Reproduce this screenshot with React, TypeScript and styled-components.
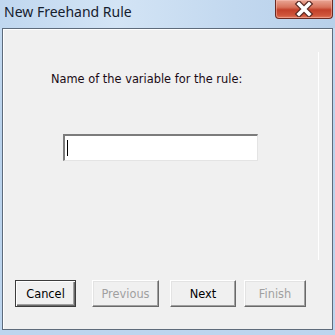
import React, { FC } from "react";
import styled, { createGlobalStyle } from "styled-components";

const GlobalStyle = createGlobalStyle`
  html, body {
    margin: 0;
    padding: 0;
    width: 335px;
    height: 335px;
    overflow: hidden;
    background: #bcd4ed;
  }
`;

const Window = styled.div`
  width: 335px;
  height: 335px;
  display: flex;
  flex-direction: column;
  background: linear-gradient(180deg, #c6dcf2 0%, #b9d2ec 40%, #bdd5ee 100%);
  box-sizing: border-box;
`;

const TitleBar = styled.div`
  height: 28px;
  display: flex;
  align-items: flex-start;
  justify-content: space-between;
  background: linear-gradient(90deg, #c0d7ef 0%, #d3e4f5 35%, #c2d8ef 70%, #b8d0ea 100%);
`;

const Title = styled.div`
  font-family: "Noto Sans", "Open Sans", sans-serif;
  font-size: 14px;
  color: #15202e;
  padding: 2px 0 0 4px;
  line-height: 20px;
`;

const CloseButton = styled.div`
  width: 58px;
  height: 19px;
  margin-right: 2px;
  border: 1px solid #6b2a22;
  border-top: none;
  border-radius: 0 0 4px 4px;
  box-sizing: border-box;
  background: linear-gradient(180deg, #e9a695 0%, #d8735c 40%, #c2402a 55%, #cf553b 85%, #e07a5e 100%);
  box-shadow: inset 0 0 0 1px rgba(255, 200, 190, 0.45);
  display: flex;
  align-items: center;
  justify-content: center;
`;

const Client = styled.div`
  flex: 1;
  margin: 0 2px 5px 2px;
  background: #f0f0f0;
  border: 1px solid #5e6b7b;
  box-shadow: inset 1px 1px 0 #ffffff;
  display: flex;
  flex-direction: column;
`;

const Middle = styled.div`
  flex: 1;
  display: flex;
`;

const Main = styled.div`
  flex: 1;
  display: flex;
  flex-direction: column;
  padding-left: 48px;
`;

const Label = styled.div`
  font-family: "DejaVu Sans", Verdana, sans-serif;
  font-size: 11.4px;
  color: #1a0a14;
  margin-top: 43px;
  line-height: 14px;
`;

const TextField = styled.div`
  width: 195px;
  height: 27px;
  margin: 48px 0 0 12px;
  box-sizing: border-box;
  background: #ffffff;
  border-top: 2px solid #7c7c7c;
  border-left: 2px solid #7c7c7c;
  border-right: 1px solid #e4e4e4;
  border-bottom: 1px solid #e4e4e4;
  display: flex;
  align-items: center;
  padding-left: 2px;
`;

const Caret = styled.div`
  width: 1px;
  height: 16px;
  background: #000000;
`;

const Rail = styled.div`
  width: 1px;
  height: 208px;
  margin: 23px 13px 0 0;
  background: #ffffff;
`;

const ButtonRow = styled.div`
  display: flex;
  padding: 0 0 22px 12px;
`;

const Button = styled.div<{ $w: number; $ml: number; $disabled?: boolean; $default?: boolean }>`
  width: ${(p) => p.$w}px;
  height: 27px;
  margin-left: ${(p) => p.$ml}px;
  box-sizing: border-box;
  background: #f0f0f0;
  border: 1px solid ${(p) => (p.$default ? "#3c3c3c" : "#f0f0f0")};
  border-top-color: ${(p) => (p.$default ? "#3c3c3c" : "#ffffff")};
  border-left-color: ${(p) => (p.$default ? "#3c3c3c" : "#ffffff")};
  border-right-color: ${(p) => (p.$default ? "#3c3c3c" : "#696969")};
  border-bottom-color: ${(p) => (p.$default ? "#3c3c3c" : "#696969")};
  box-shadow: ${(p) =>
    p.$default
      ? "inset 1px 1px 0 #ffffff, inset -1px -1px 0 #696969, inset -2px -2px 0 #a0a0a0"
      : "inset -1px -1px 0 #a0a0a0, inset 1px 1px 0 #e3e3e3"};
  display: flex;
  align-items: center;
  justify-content: center;
  font-family: "DejaVu Sans", Verdana, sans-serif;
  font-size: 11.4px;
  color: ${(p) => (p.$disabled ? "#a0a0a0" : "#000000")};
`;

const CloseGlyph: FC = () => (
  <svg width="24" height="16" viewBox="0 0 24 16">
    <path d="M7 3 L17 13 M17 3 L7 13" stroke="#5a2a24" strokeWidth="6" strokeLinecap="square" />
    <path d="M7 3 L17 13 M17 3 L7 13" stroke="#ffffff" strokeWidth="3.6" strokeLinecap="square" />
  </svg>
);

const App: FC = () => (
  <>
    <GlobalStyle />
    <Window>
      <TitleBar>
        <Title>New Freehand Rule</Title>
        <CloseButton>
          <CloseGlyph />
        </CloseButton>
      </TitleBar>
      <Client>
        <Middle>
          <Main>
            <Label>Name of the variable for the rule:</Label>
            <TextField>
              <Caret />
            </TextField>
          </Main>
          <Rail />
        </Middle>
        <ButtonRow>
          <Button $w={61} $ml={0} $default>Cancel</Button>
          <Button $w={67} $ml={16} $disabled>Previous</Button>
          <Button $w={66} $ml={11}>Next</Button>
          <Button $w={62} $ml={8} $disabled>Finish</Button>
        </ButtonRow>
      </Client>
    </Window>
  </>
);

export default App;
